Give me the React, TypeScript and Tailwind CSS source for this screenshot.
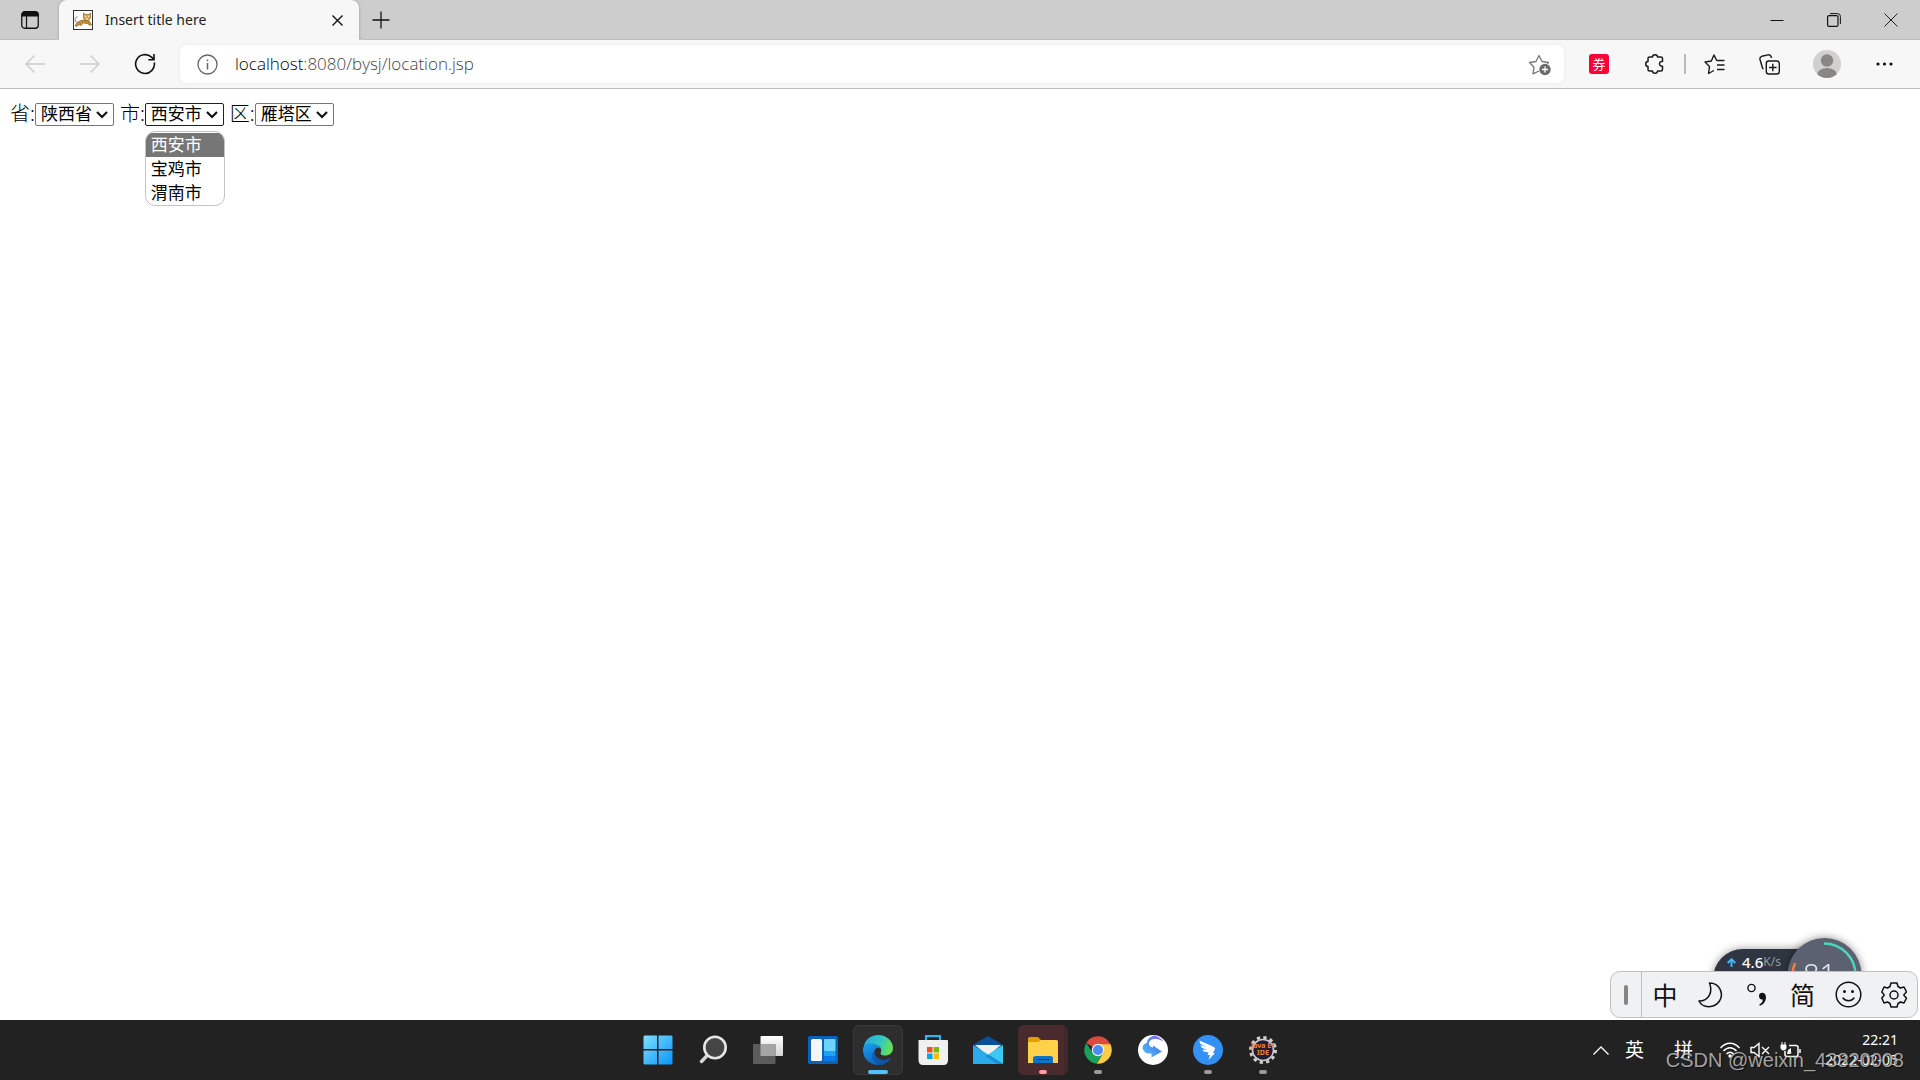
import { useState } from "react";

const pageFont = "font-['Noto_Sans','Noto_Sans_CJK_SC',sans-serif]";

const provinces = ["陕西省"];
const cities = ["西安市", "宝鸡市", "渭南市"];
const districts = ["雁塔区"];

function TabBar() {
  return (
    <header className="flex h-10 items-stretch bg-[#cdcdcd]">
      <button type="button" aria-label="Tab actions" className="flex w-[59px] items-center justify-center rounded-br-md border-b border-[#bdbdbd]">
        <svg width="18" height="18" viewBox="0 0 18 18" fill="none" stroke="#111">
          <rect x="0.75" y="0.75" width="16.5" height="16.5" rx="3" strokeWidth="1.3" />
          <path d="M1 3.5Q1 1 3.5 1H14.5Q17 1 17 3.5V5H1Z" fill="#111" />
          <path d="M5.5 5V17" strokeWidth="1.2" />
        </svg>
      </button>
      <div className="flex w-[300px] items-center rounded-t-lg bg-[#f7f7f7] pl-3.5 pr-2.5 shadow-[0_0_3px_rgba(0,0,0,0.25)] [clip-path:inset(0_-4px_0_-4px)]">
        <svg width="20" height="20" viewBox="0 0 20 20">
          <rect x="0.5" y="0.5" width="19" height="19" fill="#fff" stroke="#333" />
          <path d="M4.5 12.5C1 12 1.5 7 5 6.5" fill="none" stroke="#aaa" strokeWidth="1.2" />
          <path d="M2 15.5L5 12L8 10.5L11.5 10L16 11L18.5 14.5L17 15.5L14.5 13.5L10.5 13L7.5 15.5L6 14.5L3.5 16.5Z" fill="#c98f2c" stroke="#5e4a22" strokeWidth="0.6" />
          <path d="M10.5 3L12.5 4.5H15.5L17.5 3V8L15.5 10.5H12.5L10.5 8Z" fill="#d9a441" stroke="#6b5426" strokeWidth="0.6" />
          <path d="M11.8 6.3H13.2M15 6.3H16.4M13 9H15.2" stroke="#fff" />
        </svg>
        <span className="ml-3 flex-1 text-sm text-[#222]">Insert title here</span>
        <button type="button" aria-label="Close tab" className="flex size-6 items-center justify-center">
          <svg width="11" height="11" viewBox="0 0 11 11" stroke="#111" strokeWidth="1.4">
            <path d="M0.5 0.5L10.5 10.5M10.5 0.5L0.5 10.5" />
          </svg>
        </button>
      </div>
      <div className="flex flex-1 items-center justify-between rounded-bl-md border-b border-[#bdbdbd] pl-2.5">
        <button type="button" aria-label="New tab" className="flex size-6 items-center justify-center">
          <svg width="18" height="18" viewBox="0 0 18 18" stroke="#111" strokeWidth="1.3">
            <path d="M9 0.5V17.5M0.5 9H17.5" />
          </svg>
        </button>
        <div className="flex h-full">
          <button type="button" aria-label="Minimize" className="flex w-[57px] items-center justify-center">
            <svg width="14" height="14" viewBox="0 0 14 14" stroke="#111">
              <path d="M0.5 7.5H13.5" />
            </svg>
          </button>
          <button type="button" aria-label="Restore" className="flex w-[57px] items-center justify-center">
            <svg width="14" height="14" viewBox="0 0 14 14" fill="none" stroke="#111">
              <rect x="0.6" y="2.6" width="10.4" height="10.8" rx="1.5" strokeWidth="1.2" />
              <path d="M3 0.6H10.5Q13.4 0.6 13.4 3.5V11" />
            </svg>
          </button>
          <button type="button" aria-label="Close" className="flex w-[58px] items-center justify-center">
            <svg width="14" height="14" viewBox="0 0 14 14" stroke="#222">
              <path d="M0.5 0.5L13.5 13.5M13.5 0.5L0.5 13.5" />
            </svg>
          </button>
        </div>
      </div>
    </header>
  );
}

function Toolbar() {
  return (
    <nav className="flex h-[49px] items-center border-b border-[#bcbcbc] bg-[#f7f7f7]">
      <div className="flex w-[180px] shrink-0 items-center pl-[7px]">
        <button type="button" aria-label="Back" className="flex w-[55px] items-center justify-center">
          <svg width="20" height="18" viewBox="0 0 20 18" fill="none" stroke="#ccc" strokeWidth="1.4">
            <path d="M20 9H1M9.5 0.5L1 9L9.5 17.5" />
          </svg>
        </button>
        <button type="button" aria-label="Forward" className="flex w-[55px] items-center justify-center">
          <svg width="20" height="18" viewBox="0 0 20 18" fill="none" stroke="#ccc" strokeWidth="1.4">
            <path d="M0 9H19M10.5 0.5L19 9L10.5 17.5" />
          </svg>
        </button>
        <button type="button" aria-label="Refresh" className="flex w-[55px] items-center justify-center">
          <svg width="22" height="22" viewBox="0 0 22 22" fill="none" stroke="#111" strokeWidth="1.6">
            <path d="M20.3 9.5A9.4 9.4 0 1 1 17.5 4.2L20 6.5M20 1V6.7H14.3" />
          </svg>
        </button>
      </div>
      <div className="flex h-[38px] flex-1 items-center rounded-md bg-white pl-[17px] pr-3 shadow-[0_0_3px_rgba(0,0,0,0.08)]">
        <svg width="21" height="21" viewBox="0 0 21 21" fill="none" stroke="#666" strokeWidth="1.3">
          <circle cx="10.5" cy="10.5" r="9.5" />
          <path d="M10.5 9V15.5M10.5 5.5V7.2" strokeWidth="1.5" />
        </svg>
        <a href="#location" className="ml-[17px] flex-1 font-['Open_Sans',sans-serif] text-[17px] font-light text-[#444]">
          <span className="text-black">localhost</span>:8080/bysj/location.jsp
        </a>
        <button type="button" aria-label="Add to favorites" className="pt-0.5">
          <svg width="24" height="22" viewBox="0 0 24 22" fill="none" stroke="#777" strokeWidth="1.3" strokeLinejoin="round">
            <path d="M11 17L5 19.8L6 13.3L1.5 8.5L8 7.5L11 1.5L14 7.5L20.5 8.5L19.5 10" />
            <circle cx="17" cy="15.5" r="5.7" fill="#6b6b6b" stroke="none" />
            <path d="M17 12.5V18.5M14 15.5H20" stroke="#fff" />
          </svg>
        </button>
      </div>
      <div className="flex w-[356px] shrink-0 items-center pl-[7px]">
        <button type="button" aria-label="Coupons" className="flex w-14 justify-center">
          <span className="flex size-5 items-center justify-center rounded-[3px] bg-[#ff0036] font-['Noto_Sans_CJK_SC',sans-serif] text-[13px] leading-5 text-white">券</span>
        </button>
        <button type="button" aria-label="Extensions" className="flex w-14 justify-center">
          <svg width="20" height="20" viewBox="0 0 20 20" fill="none" stroke="#1a1a1a" strokeWidth="1.5" strokeLinejoin="round">
            <path d="M4.5 3H7.5C7.5 0 12.5 0 12.5 3H16Q17.5 3 17.5 4.5V7.5C13.5 6.8 13.5 12.7 17.5 12.2V15.5Q17.5 17 16 17H12.5C12.5 20 7.5 20 7.5 17H4.5Q3 17 3 15.5V12.5C0 12.5 0 7.5 3 7.5V4.5Q3 3 4.5 3Z" />
          </svg>
        </button>
        <span className="ml-px h-5 w-0.5 bg-[#bbb]" />
        <button type="button" aria-label="Favorites" className="ml-px flex w-[54px] justify-center">
          <svg width="21" height="21" viewBox="0 0 21 21" fill="none" stroke="#1a1a1a" strokeWidth="1.4" strokeLinejoin="round">
            <path d="M10 16.5L4.5 19.5L5.5 12.5L1 8L7.3 7L10 1L12.7 6.5H20.5M13 11H20.5M13 15.5H20.5" />
          </svg>
        </button>
        <button type="button" aria-label="Collections" className="flex w-14 justify-center">
          <svg width="21" height="21" viewBox="0 0 21 21" fill="none" stroke="#1a1a1a" strokeWidth="1.4">
            <path d="M4.5 15C3.5 14.5 3.4 14 3.2 13L1 5.5Q0.5 3 2.8 2.3L9 0.9Q11.5 0.4 12.3 3V4" />
            <rect x="7.3" y="7" width="13" height="13" rx="2.5" />
            <path d="M13.8 9.7V17.3M10 13.5H17.6" />
          </svg>
        </button>
        <button type="button" aria-label="Profile" className="flex w-[60px] justify-center">
          <svg width="28" height="28" viewBox="0 0 28 28">
            <defs>
              <clipPath id="avatar">
                <circle cx="14" cy="14" r="14" />
              </clipPath>
            </defs>
            <g clipPath="url(#avatar)">
              <rect width="28" height="28" fill="#d2d0ce" />
              <circle cx="14" cy="10.5" r="6.2" fill="#8a8684" />
              <ellipse cx="14" cy="25" rx="10" ry="7" fill="#8a8684" />
            </g>
          </svg>
        </button>
        <button type="button" aria-label="Settings and more" className="flex w-[54px] justify-center">
          <svg width="17" height="4" viewBox="0 0 17 4" fill="#111">
            <circle cx="2" cy="2" r="1.6" />
            <circle cx="8.5" cy="2" r="1.6" />
            <circle cx="15" cy="2" r="1.6" />
          </svg>
        </button>
      </div>
    </nav>
  );
}

type PickerProps = {
  id: string;
  label: string;
  options: string[];
  value: string;
  onChange: (v: string) => void;
  open?: boolean;
};

function Picker({ id, label, options, value, onChange, open }: PickerProps) {
  return (
    <div className="flex items-center">
      <label htmlFor={id} className="text-[20px] font-light leading-6">{label}:</label>
      <div className="relative">
        <select
          id={id}
          value={value}
          onChange={(e) => onChange(e.target.value)}
          className={`block h-[23px] w-[79px] appearance-none rounded-[2px] border bg-white pl-[5px] text-[17px] leading-5 ${open ? "border-[#222]" : "border-[#767676]"}`}
        >
          {options.map((o) => (
            <option key={o}>{o}</option>
          ))}
        </select>
        <svg width="12" height="8" viewBox="0 0 12 8" fill="none" stroke="#111" strokeWidth="2.2" className="pointer-events-none absolute right-1.5 top-2">
          <path d="M1 1L6 6L11 1" />
        </svg>
        {open && (
          <ul role="listbox" aria-label={label} className="absolute left-0 top-7 w-20 overflow-hidden rounded-[10px] border border-[#c4c4c4] bg-white pt-px text-[17px] leading-6">
            {options.map((o) => (
              <li
                key={o}
                role="option"
                aria-selected={o === value}
                onClick={() => onChange(o)}
                className={`pl-[5px] ${o === value ? "bg-[#767676] text-white" : "text-black"}`}
              >
                {o}
              </li>
            ))}
          </ul>
        )}
      </div>
    </div>
  );
}

function SpeedWidget() {
  return (
    <>
      <div className="absolute bottom-[41px] right-[95px] flex h-[30px] w-28 items-center rounded-tl-full bg-[#2f3641] pb-1 pl-3.5 text-white shadow-[0_0_8px_rgba(0,0,0,0.4)]">
        <svg width="9" height="9" viewBox="0 0 9 9" fill="none" stroke="#45b4ff" strokeWidth="2">
          <path d="M4.5 9V1.5M0.7 5L4.5 1.3L8.3 5" />
        </svg>
        <span className="ml-1.5 text-[15px] font-medium">4.6</span>
        <span className="text-[12px] text-[#9298a2]">K/s</span>
      </div>
      <svg width="76" height="76" viewBox="0 0 76 76" className="absolute bottom-[7px] right-[58px] drop-shadow-[0_0_4px_rgba(0,0,0,0.45)]">
        <circle cx="38.5" cy="38" r="37" fill="#5b6170" />
        <path d="M38 6.5A31.5 31.5 0 0 1 69.5 38" fill="none" stroke="#4fd6b8" strokeWidth="2.5" />
        <path d="M6.5 38A31 31 0 0 1 9 26" fill="none" stroke="#ff7a45" strokeWidth="2.5" />
        <text x="17" y="48" fontSize="29" fontWeight="300" fill="#e6e8ec">81</text>
      </svg>
    </>
  );
}

function ImeBar() {
  return (
    <div className="absolute bottom-0.5 right-0.5 flex h-[47px] w-[308px] items-center rounded-[10px] border border-[#c0c0c0] bg-[#f0f1f2] text-[#111]">
      <div className="flex h-full w-[31px] items-center justify-center border-r border-[#c0c0c0]">
        <span className="h-5 w-1 rounded-full bg-[#858585]" />
      </div>
      <div className="grid flex-1 grid-cols-6 items-center justify-items-center text-[25px] leading-8">
        <button type="button">中</button>
        <button type="button" aria-label="Half width">
          <svg width="25" height="26" viewBox="0 0 25 26" fill="none" stroke="#111" strokeWidth="1.5" strokeLinejoin="round">
            <path d="M11.5 1C22 1 26 12 21.5 19C16.5 26.5 4.5 26.5 1 19C11 19 15 10 11.5 1Z" />
          </svg>
        </button>
        <button type="button" aria-label="Punctuation">
          <svg width="20" height="24" viewBox="0 0 20 24">
            <circle cx="4.5" cy="5" r="3.6" fill="none" stroke="#111" strokeWidth="1.4" />
            <path d="M12 12.8C12 8.5 19 8.5 19 14C19 18.5 16.5 21.5 12.8 22.8L12.3 21.5C14.5 20.5 15.8 18.5 15.8 16.5C13.5 17 12 15.5 12 12.8Z" fill="#111" />
          </svg>
        </button>
        <button type="button">简</button>
        <button type="button" aria-label="Emoji">
          <svg width="27" height="27" viewBox="0 0 27 27" fill="none" stroke="#111" strokeWidth="1.5" strokeLinecap="round">
            <circle cx="13.5" cy="13.5" r="12.3" />
            <path d="M8 17C10.5 20.5 16.5 20.5 19 17" />
            <circle cx="9.5" cy="10.5" r="1.5" fill="#111" stroke="none" />
            <circle cx="17.5" cy="10.5" r="1.5" fill="#111" stroke="none" />
          </svg>
        </button>
        <button type="button" aria-label="IME settings">
          <svg width="26" height="26" viewBox="0 0 26 26" fill="none" stroke="#111" strokeWidth="1.5" strokeLinejoin="round">
            <path d="M10 1H16L17 4.5L19.5 6L23 5L25.5 10L23 12.5V13.5L25.5 16L23 21L19.5 20L17 21.5L16 25H10L9 21.5L6.5 20L3 21L0.8 16L3 13.5V12.5L0.8 10L3 5L6.5 6L9 4.5Z" />
            <circle cx="13" cy="13" r="4" />
          </svg>
        </button>
      </div>
    </div>
  );
}

const apps = [
  {
    name: "Start",
    icon: (
      <svg width="30" height="30" viewBox="0 0 30 30">
        <defs>
          <linearGradient id="win" x1="0" y1="0" x2="1" y2="1">
            <stop offset="0" stopColor="#7de0ff" />
            <stop offset="1" stopColor="#0a94fb" />
          </linearGradient>
        </defs>
        <path d="M1.5 0.5H14V14H0.5V1.5ZM15.5 0.5H28.5L29.5 1.5V14H15.5ZM0.5 15.5H14V29.5H1.5L0.5 28.5ZM15.5 15.5H29.5V28.5L28.5 29.5H15.5Z" fill="url(#win)" />
      </svg>
    ),
  },
  {
    name: "Search",
    icon: (
      <svg width="30" height="30" viewBox="0 0 30 30" fill="none">
        <path d="M11 18.5L3.5 26.5" stroke="#d4d6d8" strokeWidth="3.4" strokeLinecap="round" />
        <circle cx="17" cy="12.5" r="10.7" fill="#454545" stroke="#e6e6e6" strokeWidth="2.6" />
      </svg>
    ),
  },
  {
    name: "Task view",
    icon: (
      <svg width="30" height="30" viewBox="0 0 30 30">
        <defs>
          <linearGradient id="tv" x1="0" y1="0" x2="0" y2="1">
            <stop offset="0" stopColor="#fff" />
            <stop offset="1" stopColor="#d5d5d5" />
          </linearGradient>
        </defs>
        <rect x="7.5" y="1" width="22.5" height="20" rx="1" fill="url(#tv)" />
        <rect x="0" y="9" width="22.5" height="20" rx="1" fill="#5c5c5c" />
        <rect x="7.5" y="9" width="15" height="12" fill="#a5a5a5" />
      </svg>
    ),
  },
  {
    name: "Widgets",
    icon: (
      <svg width="30" height="30" viewBox="0 0 30 30">
        <rect x="0" y="1" width="30" height="28" rx="1.5" fill="#0a63b8" />
        <rect x="3" y="4" width="11" height="22" rx="1.5" fill="#f5f5f5" />
        <rect x="16" y="4" width="11.5" height="12" rx="1" fill="#6cd5ff" />
        <rect x="16" y="16" width="11.5" height="5" fill="#1fa2f2" />
        <rect x="16" y="21" width="11.5" height="5" fill="#087be8" />
      </svg>
    ),
  },
  {
    name: "Edge",
    state: "active",
    icon: (
      <svg width="30" height="30" viewBox="0 0 30 30">
        <defs>
          <linearGradient id="edgeTop" x1="0" y1="0.3" x2="1" y2="0.6">
            <stop offset="0" stopColor="#2aa9e0" />
            <stop offset="0.5" stopColor="#2fc6c8" />
            <stop offset="1" stopColor="#69e34b" />
          </linearGradient>
          <linearGradient id="edgeLow" x1="0" y1="0" x2="0.6" y2="1">
            <stop offset="0" stopColor="#1ca0ee" />
            <stop offset="1" stopColor="#0a5dbb" />
          </linearGradient>
        </defs>
        <path d="M0.5 13C1.5 5 7.5 0 15 0C24 0 30 6.5 30 13C30 18 26 20.5 22 20.5C18.5 20.5 16.8 19 17.8 17.5C19 15.5 18.5 11.5 13.5 10C8 8.5 2 9.5 0.5 13Z" fill="url(#edgeTop)" />
        <path d="M0 15C0 10.5 4 8 8.5 8.5C13 8.5 17.5 11 18 14.5C17 12 12.5 12 11.5 16C10.5 21 16 25.5 21 25C24 25 26.5 23.5 28 22.8C25.5 27.5 21 30 15.5 30C6.5 30 0 23.5 0 15Z" fill="url(#edgeLow)" />
        <path d="M11.5 16C10.5 21 16 25.5 21 25C24 25 26.5 23.5 28 22.8C25.5 27.5 21 30 15.5 30C9.5 27 6.5 19 11.5 16Z" fill="#0b4e9f" opacity="0.6" />
      </svg>
    ),
  },
  {
    name: "Store",
    icon: (
      <svg width="30" height="30" viewBox="0 0 30 30">
        <path d="M8 6V1.2H22V6" fill="none" stroke="#27b7e8" strokeWidth="2.2" />
        <path d="M1 5H29Q30 5 30 6V25Q30 30 25.5 30H5Q0.5 30 0.5 25V6Q0.5 5 1 5Z" fill="#f0f0f0" />
        <path d="M9 12H14.5V17.5H9Z" fill="#f25022" />
        <path d="M15.5 12H21V17.5H15.5Z" fill="#7fba00" />
        <path d="M9 18.5H14.5V24H9Z" fill="#00a4ef" />
        <path d="M15.5 18.5H21V24H15.5Z" fill="#ffb900" />
      </svg>
    ),
  },
  {
    name: "Mail",
    icon: (
      <svg width="30" height="30" viewBox="0 0 30 30">
        <path d="M0 10L15 1L30 10L15 20Z" fill="#0a4f9c" />
        <path d="M2 10H28L15 21Z" fill="#f0f0f0" />
        <path d="M0 10L30 29H0Z" fill="#2cabec" />
        <path d="M30 10V29L15 19.5Z" fill="#3cc8f4" />
        <path d="M15 19.5L30 29H24L12 21Z" fill="#1a8fdd" />
      </svg>
    ),
  },
  {
    name: "File Explorer",
    state: "alert",
    icon: (
      <svg width="30" height="30" viewBox="0 0 30 30">
        <path d="M0 3.5Q0 2 1.5 2H10L13 5V10H0Z" fill="#e0a000" />
        <path d="M0 7H10L13 5H28.5Q30 5 30 6.5V28H0Z" fill="#ffd04a" />
        <path d="M5 28V23.5Q5 21 7.5 21H22.5Q25 21 25 23.5V28Z" fill="#1173c8" />
        <path d="M9 24.5H21.5" stroke="#0a4580" strokeWidth="1.2" />
      </svg>
    ),
  },
  {
    name: "Chrome",
    state: "running",
    icon: (
      <svg width="30" height="30" viewBox="0 0 30 30">
        <path d="M15 15L3.2 8A13.7 13.7 0 0 1 27 8.5L27.7 10H15Z" fill="#db4a3f" />
        <path d="M15 15L20 18L14 28.7A13.7 13.7 0 0 1 3.2 8L10 18Z" fill="#1da05a" />
        <path d="M15 9.3H27.5A13.7 13.7 0 0 1 14 28.7L20.5 17.5Z" fill="#ffcd42" />
        <circle cx="15" cy="15" r="6.2" fill="#f1f1f1" />
        <circle cx="15" cy="15" r="5" fill="#4c8bf5" />
      </svg>
    ),
  },
  {
    name: "Assistant",
    icon: (
      <svg width="30" height="30" viewBox="0 0 30 30">
        <defs>
          <linearGradient id="bird" x1="1" y1="0" x2="0" y2="1">
            <stop offset="0" stopColor="#8b5cf6" />
            <stop offset="0.5" stopColor="#4b8df0" />
            <stop offset="1" stopColor="#5cc4f5" />
          </linearGradient>
        </defs>
        <circle cx="15" cy="15" r="15" fill="#fff" />
        <path d="M16 0.5C11 2 9 5 9 8C5 9 4 12 5 14.5C6.5 18 10 19 13.5 18.5V22.5L24 16.5L15 10.5V12.5C11.5 12 10.5 9.5 11 7.5C12.5 3.5 19 2 25.5 7C23 3 19.5 1 16 0.5Z" fill="url(#bird)" />
      </svg>
    ),
  },
  {
    name: "DingTalk",
    state: "running",
    icon: (
      <svg width="30" height="30" viewBox="0 0 30 30">
        <circle cx="15" cy="15" r="15" fill="#3391f5" />
        <path d="M6.5 5.5L20 11.5Q22.5 12.5 22 14L20 18H22L15.500 25L17 20H14.5L15.5 17.5L10.5 16.5L9.5 14.5L14 15L8.5 12.5L7.5 10L13 12L7 8.5Z" fill="#fff" />
      </svg>
    ),
  },
  {
    name: "Java EE IDE",
    state: "running",
    icon: (
      <svg width="30" height="30" viewBox="0 0 30 30">
        <circle cx="15" cy="15" r="12.5" fill="none" stroke="#d0d0d0" strokeWidth="3" strokeDasharray="3.27 3.27" />
        <circle cx="15" cy="15" r="10.5" fill="#211d38" stroke="#c8c8c8" strokeWidth="1.6" />
        <text x="15" y="13" textAnchor="middle" fontSize="7" fontWeight="700" fill="#f08428">Java EE</text>
        <text x="15" y="20" textAnchor="middle" fontSize="7" fontWeight="700" fill="#f08428">IDE</text>
      </svg>
    ),
  },
];

function Taskbar() {
  return (
    <footer className="relative grid h-[60px] shrink-0 grid-cols-[1fr_auto_1fr] items-center bg-[#222] text-white">
      <div />
      <div className="flex gap-[5px] pl-px">
        {apps.map((app) => (
          <button
            key={app.name}
            type="button"
            aria-label={app.name}
            className={`relative flex size-[50px] items-center justify-center rounded-md ${
              app.state === "active" ? "border border-[#3a3a3a] bg-[#2e2e2e]" : app.state === "alert" ? "border-r-4 border-[#40292b] bg-[#492a2d] pl-1" : ""
            }`}
          >
            {app.icon}
            {app.state === "active" && <span className="absolute bottom-0 h-1 w-5 rounded-full bg-[#4cc2ff]" />}
            {app.state === "alert" && <span className="absolute bottom-px h-1 w-2 rounded-full bg-[#ff99a4]" />}
            {app.state === "running" && <span className="absolute bottom-px h-1 w-2 rounded-full bg-[#999]" />}
          </button>
        ))}
      </div>
      <div className="flex items-center justify-end pr-[22px]">
        <button type="button" aria-label="Show hidden icons" className="flex w-6 justify-center">
          <svg width="16" height="9" viewBox="0 0 16 9" fill="none" stroke="#fff" strokeWidth="1.3">
            <path d="M0.5 8.5L8 1L15.5 8.5" />
          </svg>
        </button>
        <button type="button" className="ml-3 text-[19px] leading-6">英</button>
        <button type="button" className="ml-[30px] text-[19px] leading-6">拼</button>
        <button type="button" aria-label="Network, volume and battery" className="ml-[27px] flex items-center gap-2.5">
          <svg width="20" height="16" viewBox="0 0 20 16" fill="none" stroke="#fff" strokeWidth="1.5">
            <path d="M0.5 6C6 -0.5 14 -0.5 19.5 6M3.5 9C7.5 4.5 12.5 4.5 16.5 9M6.5 12C8.8 9.5 11.2 9.5 13.5 12" />
            <circle cx="10" cy="14" r="1.7" fill="#fff" stroke="none" />
          </svg>
          <svg width="20" height="16" viewBox="0 0 20 16" fill="none" stroke="#fff" strokeWidth="1.4">
            <path d="M1 5.5H4L9 1.5V14.5L4 10.5H1ZM12 5L19 12M19 5L12 12" />
          </svg>
          <svg width="21" height="17" viewBox="0 0 21 17" fill="none" stroke="#fff" strokeWidth="1.5">
            <path d="M9 3.5H16Q18 3.5 18 5.5V12.5Q18 14.5 16 14.5H7Q5 14.5 5 12.5V9M20 7V11" />
            <path d="M1 3H6V6Q6 8 3.5 8Q1 8 1 6ZM2 0V3M5 0V3" fill="#fff" strokeWidth="1" />
            <path d="M8 8L11 6V12H7Z" fill="#fff" stroke="none" />
          </svg>
        </button>
        <div className="ml-6 text-right text-[14px] leading-5">
          <p>22:21</p>
          <p>2022-02-05</p>
        </div>
      </div>
      <p className="pointer-events-none absolute bottom-1 right-4 font-['Liberation_Sans',sans-serif] text-[20px] leading-8 text-[#c8c8c8]/80 [text-shadow:1px_1px_1px_rgba(0,0,0,0.6)]">CSDN @weixin_43820008</p>
    </footer>
  );
}

export default function App() {
  const [province, setProvince] = useState(provinces[0]);
  const [city, setCity] = useState(cities[0]);
  const [district, setDistrict] = useState(districts[0]);

  return (
    <div className={`flex min-h-screen flex-col bg-white ${pageFont}`}>
      <TabBar />
      <Toolbar />
      <main className="relative flex-1 overflow-hidden text-black">
        <form className="flex gap-1.5 pl-2.5 pt-[13px]">
          <Picker id="province" label="省" options={provinces} value={province} onChange={setProvince} />
          <Picker id="city" label="市" options={cities} value={city} onChange={setCity} open />
          <Picker id="district" label="区" options={districts} value={district} onChange={setDistrict} />
        </form>
        <SpeedWidget />
        <ImeBar />
      </main>
      <Taskbar />
    </div>
  );
}
